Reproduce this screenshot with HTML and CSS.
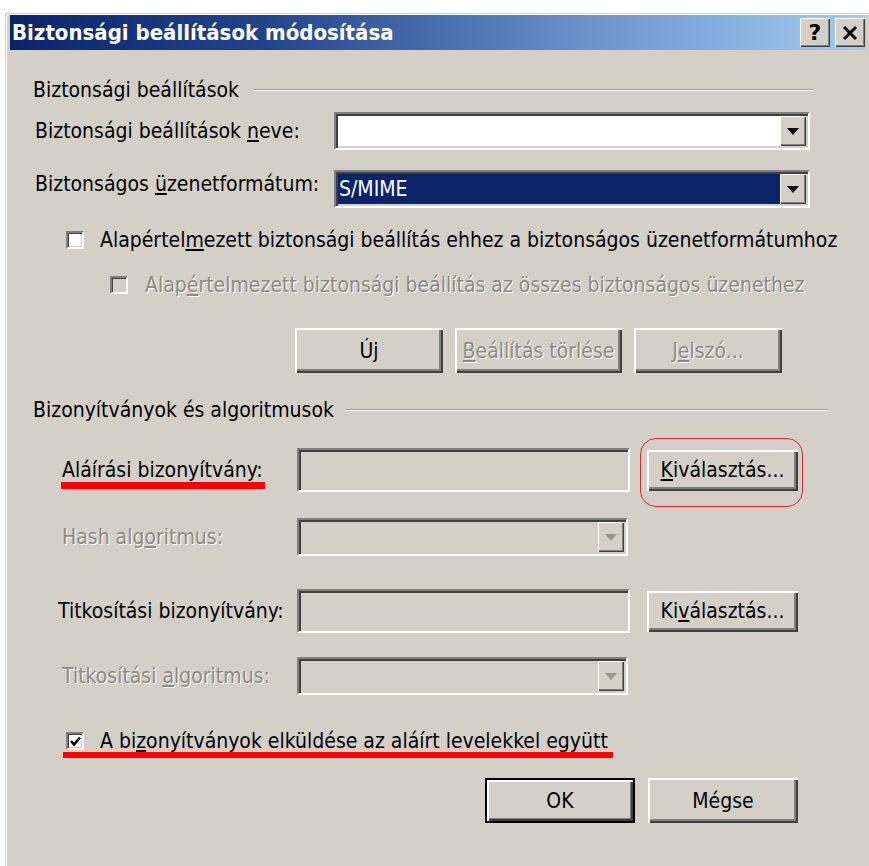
FILE: index.html
```html
<!DOCTYPE html>
<html lang="hu">
<head>
<meta charset="utf-8">
<title>Biztonsági beállítások módosítása</title>
<link rel="stylesheet" href="styles.css">
</head>
<body>
<div class="window">
  <div class="titlebar">
    <span class="title">Biztonsági beállítások módosítása</span>
    <div class="caption-btns">
      <span class="cbtn help">?</span>
      <span class="cbtn close">
        <svg width="16" height="16" viewBox="0 0 16 16"><path d="M2 2 L14 14 M14 2 L2 14" stroke="#000" stroke-width="3"/></svg>
      </span>
    </div>
  </div>

  <div class="content">
    <div class="group-head g1"><span>Biztonsági beállítások</span><i class="rule"></i></div>

    <div class="row r-name">
      <span class="lbl wide">Biztonsági beállítások <u>n</u>eve:</span>
      <div class="combo white"><span class="value"></span><span class="arrow"><i></i></span></div>
    </div>

    <div class="row r-format">
      <span class="lbl wide up">Biztonságos <u>ü</u>zenetformátum:</span>
      <div class="combo white"><span class="value selected">S/MIME</span><span class="arrow"><i></i></span></div>
    </div>

    <label class="check c1"><span class="box"></span><span>Alapértel<u>m</u>ezett biztonsági beállítás ehhez a biztonságos üzenetformátumhoz</span></label>
    <label class="check c2 disabled"><span class="box"></span><span>Alap<u>é</u>rtelmezett biztonsági beállítás az összes biztonságos üzenethez</span></label>

    <div class="btn-row">
      <span class="btn b-new">Ú<u>j</u></span>
      <span class="btn b-del disabled"><u>B</u>eállítás törlése</span>
      <span class="btn b-pw disabled">J<u>e</u>lszó...</span>
    </div>

    <div class="group-head g2"><span>Bizonyítványok és algoritmusok</span><i class="rule"></i></div>

    <div class="row cert r-sign">
      <span class="lbl"><span class="mark">Aláírási bizonyítvány:</span></span>
      <div class="field"></div>
      <span class="btn pick circled"><u>K</u>iválasztás...</span>
    </div>

    <div class="row cert r-hash">
      <span class="lbl disabled">Hash alg<u>o</u>ritmus:</span>
      <div class="combo grey"><span class="value"></span><span class="arrow off"><i></i></span></div>
    </div>

    <div class="row cert r-enc">
      <span class="lbl shift">Titkosítási bizonyítvány:</span>
      <div class="field"></div>
      <span class="btn pick">Ki<u>v</u>álasztás...</span>
    </div>

    <div class="row cert r-alg">
      <span class="lbl disabled">Titkosítási <u>a</u>lgoritmus:</span>
      <div class="combo grey"><span class="value"></span><span class="arrow off"><i></i></span></div>
    </div>

    <label class="check c3 marked"><span class="box checked"><svg width="13" height="13" viewBox="0 0 13 13"><path d="M2 6 L5 9.5 L11 2.5" fill="none" stroke="#000" stroke-width="2.6"/></svg></span><span>A bi<u>z</u>onyítványok elküldése az aláírt levelekkel együtt</span></label>

    <div class="footer">
      <span class="btn default">OK</span>
      <span class="btn">Mégse</span>
    </div>
  </div>
</div>
</body>
</html>
```

FILE: styles.css
```css
* { box-sizing: border-box; }

body {
  margin: 0;
  background: #fff;
  font-family: "DejaVu Sans Condensed", "DejaVu Sans", sans-serif;
  font-size: 21px;
  line-height: 24px;
  color: #000;
  overflow: hidden;
}

u { text-decoration: underline; text-underline-offset: 2px; }

/* dialog frame */
.window {
  margin: 13px 0 0 5px;
  height: 853px;
  background: #d4d0c8;
  border-top: 1px solid #d4d0c8;
  border-left: 1px solid #d4d0c8;
  box-shadow: inset 1px 1px #fff;
  padding: 1px 3px 0 4px;
}

.titlebar {
  height: 35px;
  display: flex;
  align-items: center;
  justify-content: space-between;
  padding: 0 1px 0 2px;
  background: linear-gradient(to right, #0a246a 0%, #23448a 30%, #7aa2d6 75%, #a6caf0 100%);
}

.title {
  color: #fff;
  font-weight: bold;
  font-size: 22px;
}

.caption-btns { display: flex; gap: 5px; }

.cbtn {
  width: 30px;
  height: 29px;
  display: flex;
  align-items: center;
  justify-content: center;
  background: #d4d0c8;
  box-shadow: inset 1px 1px #fff, inset -1px -1px #404040, inset -2px -2px #808080;
  font-weight: bold;
  font-size: 22px;
  font-family: "DejaVu Sans", sans-serif;
}

.content { padding-top: 28px; }

/* group headings with etched rule */
.group-head {
  display: flex;
  align-items: center;
  height: 24px;
  margin-left: 23px;
}
.group-head .rule {
  flex: 1;
  height: 2px;
  border-top: 1px solid #a09d96;
  border-bottom: 1px solid #fff;
  margin-left: 14px;
}
.g1 .rule { margin-right: 53px; }
.g2 { margin-top: 25px; }
.g2 .rule { margin-right: 38px; margin-left: 12px; }

/* label + control rows */
.row { display: flex; align-items: center; }
.lbl { white-space: nowrap; }
.lbl.wide { width: 299px; }
.lbl.up { position: relative; top: -5px; }

.r-name { margin-top: 10px; padding-left: 25px; }
.r-format { margin-top: 20px; padding-left: 25px; }

.cert { padding-left: 52px; }
.cert .lbl { width: 235px; }
.cert .lbl.shift { margin-left: -4px; width: 239px; }
.r-sign { margin-top: 26px; }
.r-hash { margin-top: 26px; }
.r-enc { margin-top: 33px; }
.r-alg { margin-top: 24px; }

.disabled { color: #8c8a84; text-shadow: 1px 1px 0 #fff; }
.disabled u { text-decoration-color: #8c8a84; }

/* sunken edit / combo boxes */
.combo, .field {
  border: 2px solid;
  border-color: #808080 #fff #fff #808080;
  box-shadow: inset 2px 2px #404040, inset -2px -2px #d4d0c8;
  padding: 2px;
}
.combo {
  width: 476px;
  height: 38px;
  display: flex;
}
.combo.white { background: #fff; }
.combo.grey { width: 331px; background: #d4d0c8; }
.field {
  width: 333px;
  height: 44px;
  background: #d4d0c8;
}

.combo .value {
  flex: 1;
  color: #fff;
  line-height: 30px;
  padding-left: 1px;
}
.combo .value.selected { background: #0a246a; }

.combo .arrow {
  width: 26px;
  background: #d4d0c8;
  box-shadow: inset 1px 1px #fff, inset -1px -1px #404040, inset -2px -2px #808080;
  display: flex;
  align-items: center;
  justify-content: center;
}
.combo .arrow i {
  width: 0;
  height: 0;
  border-left: 6px solid transparent;
  border-right: 6px solid transparent;
  border-top: 7px solid #000;
}
.combo .arrow.off i { border-top-color: #9a978f; }

/* checkboxes */
.check {
  display: flex;
  align-items: center;
  height: 24px;
  white-space: nowrap;
}
.check .box {
  width: 18px;
  height: 18px;
  flex: none;
  background: #fff;
  border: 2px solid;
  border-color: #808080 #fff #fff #808080;
  box-shadow: inset 1px 1px #404040, inset -1px -1px #d4d0c8;
  display: flex;
  align-items: center;
  justify-content: center;
}
.check.disabled .box { background: #d4d0c8; }
.c1 { margin-top: 20px; padding-left: 56px; gap: 16px; }
.c2 { margin-top: 21px; padding-left: 100px; gap: 17px; }
.c3 { margin-top: 34px; margin-left: 56px; gap: 16px; width: max-content; position: relative; }

/* push buttons */
.btn {
  display: inline-flex;
  align-items: center;
  justify-content: center;
  height: 45px;
  background: #d4d0c8;
  box-shadow: inset 2px 2px #fff, inset -2px -2px #404040, inset -4px -4px #808080;
  white-space: nowrap;
}

.btn-row { display: flex; gap: 12px; margin-top: 31px; padding-left: 285px; }
.b-new { width: 148px; }
.b-del { width: 167px; }
.b-pw { width: 148px; }

.pick { width: 151px; height: 41px; margin-left: 17px; }

.footer { display: flex; gap: 13px; margin-top: 25px; padding-left: 475px; }
.footer .btn { width: 150px; }
.btn.default {
  border: 2px solid #000;
  box-shadow: inset 2px 2px #fff, inset -2px -2px #404040, inset -3px -3px #808080;
}

/* red annotation marks */
.mark { position: relative; display: inline-block; }
.mark::after {
  content: "";
  position: absolute;
  left: -1px;
  right: -2px;
  top: 100%;
  height: 7px;
  background: #f00;
}
.c3::after {
  content: "";
  position: absolute;
  left: -3px;
  right: -5px;
  top: calc(100% - 1px);
  height: 6px;
  background: #f00;
}
.circled { position: relative; }
.circled::after {
  content: "";
  position: absolute;
  left: -7px;
  right: -5px;
  top: -12px;
  bottom: -16px;
  border: 1.5px solid #e2262e;
  border-radius: 16px;
}
```
